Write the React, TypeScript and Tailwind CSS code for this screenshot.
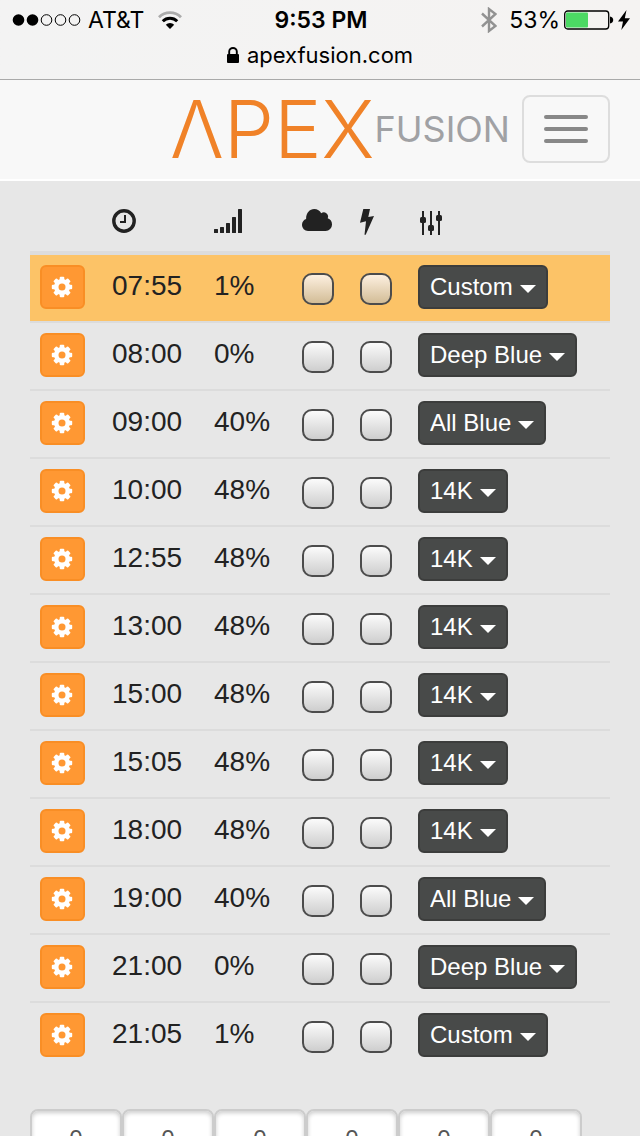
import React, { useState } from 'react';
import clsx from 'clsx';

interface Season {
  time: string;
  intensity: number;
  color: string;
}

const COLORS = ['Custom', 'Deep Blue', 'All Blue', '14K'];

const SCHEDULE: Season[] = [
  { time: '07:55', intensity: 1, color: 'Custom' },
  { time: '08:00', intensity: 0, color: 'Deep Blue' },
  { time: '09:00', intensity: 40, color: 'All Blue' },
  { time: '10:00', intensity: 48, color: '14K' },
  { time: '12:55', intensity: 48, color: '14K' },
  { time: '13:00', intensity: 48, color: '14K' },
  { time: '15:00', intensity: 48, color: '14K' },
  { time: '15:05', intensity: 48, color: '14K' },
  { time: '18:00', intensity: 48, color: '14K' },
  { time: '19:00', intensity: 40, color: 'All Blue' },
  { time: '21:00', intensity: 0, color: 'Deep Blue' },
  { time: '21:05', intensity: 1, color: 'Custom' },
];

const CogIcon = () => (
  <svg viewBox="0 0 22 22" className="w-[22px] h-[22px] mr-px mb-px" aria-hidden="true">
    <g fill="#fff">
      {[0, 45, 90, 135].map((angle) => (
        <rect key={angle} x="8.7" y="0.8" width="4.6" height="20.4" rx="1" transform={`rotate(${angle} 11 11)`} />
      ))}
      <circle cx="11" cy="11" r="8" />
    </g>
    <circle cx="11" cy="11" r="3.5" fill="#ff9833" />
  </svg>
);

const ClockIcon = () => (
  <svg viewBox="0 0 24 24" className="w-6 h-6" fill="none" stroke="#222" role="img" aria-label="Time">
    <circle cx="12" cy="12" r="10.2" strokeWidth="3.4" />
    <path d="M13 6v7H8" strokeWidth="2" />
  </svg>
);

const SignalIcon = () => (
  <svg viewBox="0 0 28 24" className="w-7 h-6" fill="#222" role="img" aria-label="Intensity">
    <rect x="0" y="20" width="4" height="4" rx="0.5" />
    <rect x="6" y="18" width="4" height="6" rx="0.5" />
    <rect x="12" y="14" width="4" height="10" rx="0.5" />
    <rect x="18" y="8" width="4" height="16" rx="0.5" />
    <rect x="24" y="0" width="4" height="24" rx="0.5" />
  </svg>
);

const CloudIcon = () => (
  <svg viewBox="0 0 30 22" className="w-[30px] h-[22px]" fill="#222" role="img" aria-label="Clouds">
    <path d="M6 22a6 6 0 0 1-6-6.2c0-2.900 1.700-5.100 4.100-5.900C4 4 7.600 0 12.200 0c3.200 0 5.800 1.700 7 4.300a4.200 4.200 0 0 1 6.500 4.900 6.500 6.500 0 0 1 4.300 6.200A6.500 6.500 0 0 1 23.600 22z" />
  </svg>
);

const BoltIcon = () => (
  <svg viewBox="0 0 14 26" className="w-[14px] h-[26px]" fill="#222" role="img" aria-label="Lightning">
    <path d="M3.300 0H10L8.300 8 14 7 5.700 25.700H4.500L6 12.300 0 13.800z" />
  </svg>
);

const SlidersIcon = () => (
  <svg viewBox="-2 -2 24 26" className="w-6 h-[26px]" fill="#222" role="img" aria-label="Color">
    <rect x="2" y="0" width="2" height="24" />
    <rect x="10" y="0" width="2" height="24" />
    <rect x="18" y="0" width="2" height="24" />
    <rect x="0" y="6" width="6" height="6" rx="1.5" />
    <rect x="8" y="14" width="6" height="6" rx="1.5" />
    <rect x="16" y="4" width="6" height="6" rx="1.5" />
  </svg>
);

const StatusBar: React.FC = () => (
  <div className="h-20 border-b border-[#a9a9a9] bg-linear-to-r from-[#f3f3f3] to-[#f5f3f2] font-['Inter',sans-serif] text-black">
    <div className="grid grid-cols-[1fr_auto_1fr] items-center h-10 pl-3 pr-[10px] text-[23px] leading-10">
      <div className="flex items-center gap-[6px]">
        <svg viewBox="0 0 70 14" className="w-[70px] h-[14px]" aria-hidden="true">
          <circle cx="6.5" cy="7" r="5.8" />
          <circle cx="20.5" cy="7" r="5.8" />
          {[34.5, 48.5, 62.5].map((cx) => (
            <circle key={cx} cx={cx} cy="7" r="5.3" fill="none" stroke="#000" />
          ))}
        </svg>
        <span>AT&amp;T</span>
        <svg viewBox="0 0 24 18" className="w-6 h-[18px] ml-2" fill="none" aria-hidden="true">
          <path d="M1 6.200a15.600 15.600 0 0 1 22 0" stroke="#ababab" strokeWidth="2.8" />
          <path d="M4.800 10.300a10.200 10.200 0 0 1 14.400 0" stroke="#000" strokeWidth="3" />
          <path d="M12 18l-4.200-4.200a5.900 5.900 0 0 1 8.400 0z" fill="#000" />
        </svg>
      </div>
      <span className="font-semibold">9:53 PM</span>
      <div className="flex items-center justify-end gap-1">
        <svg viewBox="0 0 16 26" className="w-4 h-[26px] mr-2" fill="none" stroke="#929292" strokeWidth="2.4" aria-hidden="true">
          <path d="M1 6.500l13.500 12.500L8 24V2l6.500 5L1 19.500" />
        </svg>
        <span>53%</span>
        <svg viewBox="0 0 50 20" className="w-[50px] h-5" aria-hidden="true">
          <rect x="0.7" y="1" width="44" height="18" rx="3" fill="none" stroke="#000" strokeWidth="1.3" />
          <rect x="2" y="2.5" width="22" height="15" rx="1" fill="#4cd964" />
          <path d="M46 6.500c2.200.5 3.200 1.700 3.200 3.500s-1 3-3.200 3.500z" />
        </svg>
        <svg viewBox="0 0 12 20" className="w-3 h-5" aria-hidden="true">
          <path d="M8.500 0L0 11.500h5L3.300 20 12 8.300H6.800z" />
        </svg>
      </div>
    </div>
    <div className="flex items-center justify-center gap-2 text-[22px] leading-[30px]">
      <svg viewBox="0 0 12 16" className="w-3 h-4" aria-hidden="true">
        <rect x="0" y="7" width="12" height="9" rx="1" />
        <path d="M2.200 8V4.500a3.800 3.500 0 0 1 7.600 0V8" fill="none" stroke="#000" strokeWidth="1.9" />
      </svg>
      <span>apexfusion.com</span>
    </div>
  </div>
);

const NavBar: React.FC = () => (
  <nav className="flex items-start justify-end gap-3 pt-[15px] pb-4 px-[30px] bg-[#f8f8f8] border-b-2 border-white">
    <a href="#" aria-label="Apex Fusion" className="flex items-center h-[68px] font-['Inter',sans-serif] whitespace-nowrap">
      <span className="text-[80px] leading-[80px] font-light text-[#f08228]">ΛPEX</span>
      <span className="text-4xl text-[#a0a1a4]">FUSION</span>
    </a>
    <button
      type="button"
      aria-label="Toggle navigation"
      className="flex flex-col items-center justify-center gap-2 w-[88px] h-[68px] shrink-0 rounded-lg border-2 border-[#ddd]"
    >
      <span className="w-11 h-1 rounded-sm bg-[#888]" />
      <span className="w-11 h-1 rounded-sm bg-[#888]" />
      <span className="w-11 h-1 rounded-sm bg-[#888]" />
    </button>
  </nav>
);

const Toggle: React.FC<{ label: string; active: boolean }> = ({ label, active }) => (
  <input
    type="checkbox"
    aria-label={label}
    className={clsx(
      'block appearance-none w-8 h-8 mt-2 rounded-[10px] border-2 border-[#4c4c4c] bg-linear-to-b',
      active
        ? 'from-[#fdf0e0] to-[#d3bd97] checked:to-[#a88c5c]'
        : 'from-[#fbfbfb] to-[#cecece] checked:to-[#888]'
    )}
  />
);

const ScheduleRow: React.FC<{ season: Season; active: boolean; last: boolean }> = ({ season, active, last }) => {
  const [color, setColor] = useState(season.color);
  const cell = clsx('pt-[10px] pb-3 pl-[10px] align-top', !last && 'border-b-2 border-[#dcdcdc]');

  return (
    <tr className={clsx(active && 'bg-[#fcc367]')}>
      <td className={cell}>
        <button
          type="button"
          aria-label={`Edit ${season.time}`}
          className="flex items-center justify-center w-[45px] h-11 rounded-md border-2 border-[#f98e25] bg-[#ff9833]"
        >
          <CogIcon />
        </button>
      </td>
      <td className={cell}>{season.time}</td>
      <td className={cell}>{season.intensity}%</td>
      <td className={cell}>
        <Toggle label={`Clouds at ${season.time}`} active={active} />
      </td>
      <td className={cell}>
        <Toggle label={`Lightning at ${season.time}`} active={active} />
      </td>
      <td className={cell}>
        <div className="relative flex w-fit">
          <select
            aria-label={`Color at ${season.time}`}
            value={color}
            onChange={(e) => setColor(e.target.value)}
            className="appearance-none field-sizing-content h-11 pl-[10px] pr-[33px] rounded-md border-2 border-[#3c3d3c] bg-[#484a49] text-2xl leading-10 text-white"
          >
            {COLORS.map((name) => (
              <option key={name}>{name}</option>
            ))}
          </select>
          <svg viewBox="0 0 16 8" className="absolute right-3 top-5 w-4 h-2 pointer-events-none" fill="#fff" aria-hidden="true">
            <path d="M0 0h16L8 8z" />
          </svg>
        </div>
      </td>
    </tr>
  );
};

const ScheduleTable: React.FC = () => {
  const head = 'h-[74px] pt-7 pl-[10px] align-top border-b-4 border-[#dcdcdc]';

  return (
    <table className="w-full table-fixed border-separate border-spacing-0 text-[28px] leading-[42px] text-[#222]">
      <colgroup>
        <col className="w-[72px]" />
        <col className="w-[102px]" />
        <col className="w-[88px]" />
        <col className="w-[58px]" />
        <col className="w-[58px]" />
        <col />
      </colgroup>
      <thead>
        <tr>
          <th className={head} />
          <th className={head}><ClockIcon /></th>
          <th className={head}><SignalIcon /></th>
          <th className={head}><CloudIcon /></th>
          <th className={head}><BoltIcon /></th>
          <th className={head}><SlidersIcon /></th>
        </tr>
      </thead>
      <tbody>
        {SCHEDULE.map((season, index) => (
          <ScheduleRow
            key={season.time}
            season={season}
            active={index === 0}
            last={index === SCHEDULE.length - 1}
          />
        ))}
      </tbody>
    </table>
  );
};

const ChannelInputs: React.FC = () => {
  const [values, setValues] = useState(['0', '0', '0', '0', '0', '0']);

  return (
    <div className="flex mt-10">
      {values.map((value, index) => (
        <input
          key={index}
          type="text"
          aria-label={`Channel ${index + 1}`}
          value={value}
          onChange={(e) => setValues(values.map((v, i) => (i === index ? e.target.value : v)))}
          className="w-[92px] h-[60px] rounded-lg border-2 border-[#ccc] bg-white text-center text-2xl text-[#555] shadow-[inset_0_2px_4px_rgba(0,0,0,0.2)]"
        />
      ))}
    </div>
  );
};

export default function App() {
  return (
    <div className="min-h-screen bg-[#e7e7e7] font-['Liberation_Sans',Arial,sans-serif]">
      <StatusBar />
      <NavBar />
      <main className="px-[30px]">
        <ScheduleTable />
        <ChannelInputs />
      </main>
    </div>
  );
}
